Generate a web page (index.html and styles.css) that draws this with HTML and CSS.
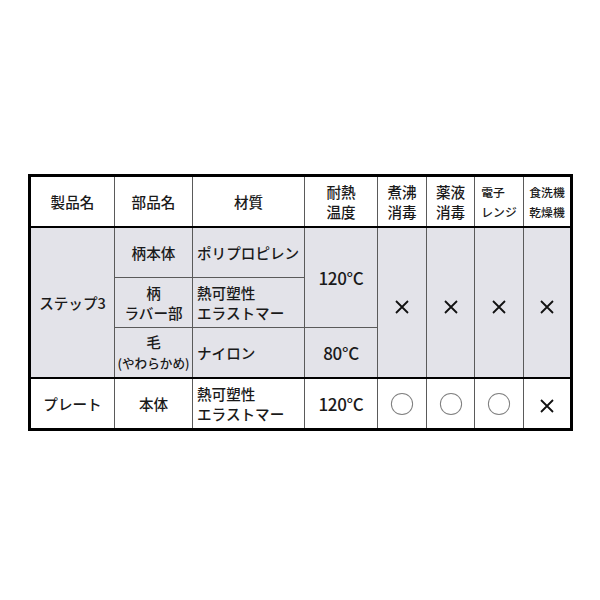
FILE: index.html
```html
<!DOCTYPE html>
<html lang="ja">
<head>
<meta charset="utf-8">
<link rel="stylesheet" href="styles.css">
</head>
<body>
<table class="spec">
  <colgroup>
    <col class="c1"><col class="c2"><col class="c3"><col class="c4">
    <col class="c5"><col class="c6"><col class="c7"><col class="c8">
  </colgroup>
  <thead>
    <tr>
      <th>製品名</th>
      <th>部品名</th>
      <th>材質</th>
      <th>耐熱<br>温度</th>
      <th>煮沸<br>消毒</th>
      <th>薬液<br>消毒</th>
      <th class="sm"><span class="blk">電子<br>レンジ</span></th>
      <th class="sm">食洗機<br>乾燥機</th>
    </tr>
  </thead>
  <tbody class="gray">
    <tr>
      <td rowspan="3">ステップ3</td>
      <td>柄本体</td>
      <td class="mat">ポリプロピレン</td>
      <td rowspan="2" class="temp">120°C</td>
      <td rowspan="3" class="mark"><svg class="x" viewBox="0 0 14 14"><path d="M1 1L13 13M13 1L1 13"/></svg></td>
      <td rowspan="3" class="mark"><svg class="x" viewBox="0 0 14 14"><path d="M1 1L13 13M13 1L1 13"/></svg></td>
      <td rowspan="3" class="mark"><svg class="x" viewBox="0 0 14 14"><path d="M1 1L13 13M13 1L1 13"/></svg></td>
      <td rowspan="3" class="mark"><svg class="x" viewBox="0 0 14 14"><path d="M1 1L13 13M13 1L1 13"/></svg></td>
    </tr>
    <tr>
      <td>柄<br>ラバー部</td>
      <td class="mat">熱可塑性<br>エラストマー</td>
    </tr>
    <tr>
      <td>毛<br><span class="paren">(やわらかめ)</span></td>
      <td class="mat">ナイロン</td>
      <td class="temp">80°C</td>
    </tr>
  </tbody>
  <tbody class="white">
    <tr>
      <td>プレート</td>
      <td>本体</td>
      <td class="mat">熱可塑性<br>エラストマー</td>
      <td class="temp">120°C</td>
      <td><svg class="o" viewBox="0 0 26 26"><circle cx="13" cy="13" r="11.5"/></svg></td>
      <td><svg class="o" viewBox="0 0 26 26"><circle cx="13" cy="13" r="11.5"/></svg></td>
      <td><svg class="o" viewBox="0 0 26 26"><circle cx="13" cy="13" r="11.5"/></svg></td>
      <td><svg class="x" viewBox="0 0 14 14"><path d="M1 1L13 13M13 1L1 13"/></svg></td>
    </tr>
  </tbody>
</table>
</body>
</html>
```

FILE: styles.css
```css
html, body {
  margin: 0;
  padding: 0;
  background: #fff;
}
body {
  font-family: "Noto Sans CJK JP", "Noto Sans", sans-serif;
  color: #1a1a1a;
  padding-top: 174px;
  padding-left: 28px;
}
.spec {
  border-collapse: collapse;
  table-layout: fixed;
  width: 543px;
  border: 3px solid #000;
  font-size: 14.6px;
  font-weight: 500;
  line-height: 20px;
}
.c1 { width: 85px; }
.c2 { width: 78px; }
.c3 { width: 112px; }
.c4 { width: 73px; }
.c5 { width: 49px; }
.c6 { width: 48px; }
.c7 { width: 49px; }
.c8 { width: 48px; }
th, td {
  border: 1px solid #5a5a5a;
  text-align: center;
  vertical-align: middle;
  padding: 0;
  height: 49px;
}
th {
  font-weight: 500;
  background: #fff;
  border-bottom: 2px solid #000;
}
th.sm {
  font-size: 11.8px;
  line-height: 20px;
}
.blk {
  display: inline-block;
  text-align: left;
}
.gray td {
  background: #e3e3e9;
}
.white td {
  background: #fff;
  border-top: 2px solid #000;
}
td.mat {
  text-align: left;
  padding-left: 4px;
}
.temp {
  font-size: 17px;
  letter-spacing: -0.3px;
}
.paren {
  font-size: 12.6px;
}
.mark {
  padding-top: 5px;
}
svg {
  display: inline-block;
  vertical-align: middle;
}
.x {
  width: 14px;
  height: 14px;
  fill: none;
  stroke: #111;
  stroke-width: 1.8;
}
.o {
  width: 24px;
  height: 24px;
  fill: none;
  stroke: #808080;
  stroke-width: 1.1;
}
```
